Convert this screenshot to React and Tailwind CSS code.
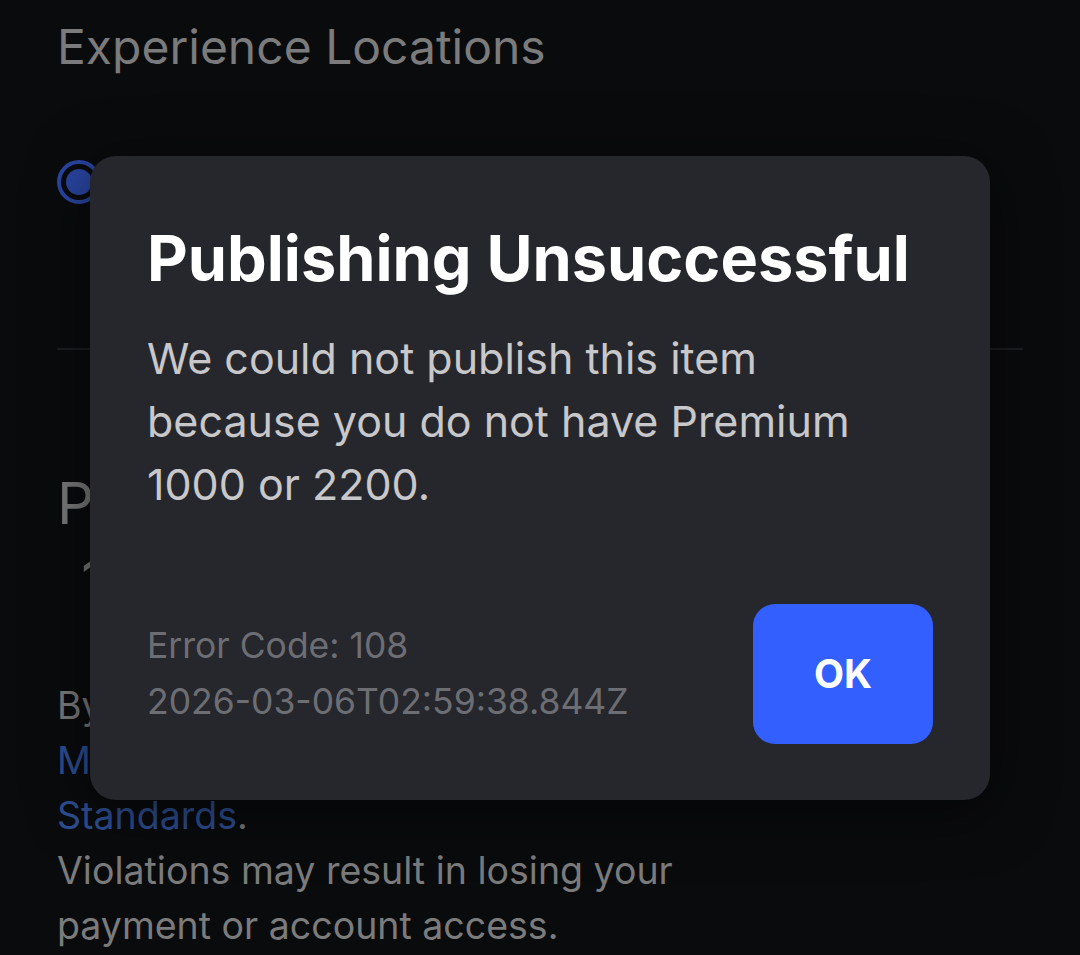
export default function App() {
  const font = { fontFamily: "Inter, 'Noto Sans', sans-serif" };

  return (
    <div className="relative w-[1080px] h-[955px] overflow-hidden bg-[#0a0b0d]" style={font}>
      {/* Page behind the dialog */}
      <div className="flex flex-col px-[57px] text-[#7b7b7c]">
        <div className="pt-[17px] text-[48px] leading-[60px]">Experience Locations</div>

        <div className="mt-[82px] flex items-center h-[46px]">
          <div className="w-[44px] h-[44px] rounded-full border-[4px] border-[#2a46a3] flex items-center justify-center">
            <div className="w-[26px] h-[26px] rounded-full bg-[#2a46a3]" />
          </div>
        </div>

        <div className="mt-[143px] h-[2px] bg-[#1c1d21]" />

        <div className="mt-[118px] text-[58px] leading-[70px]">Price</div>
        <div className="pl-[24px] mt-[8px] text-[60px] leading-[70px]">1,000</div>

        <div className="mt-[62px] text-[37.5px] leading-[55px]">
          <span className="block">By publishing, you agree to our</span>
          <span className="block text-[#2e4f93]">Marketplace Policy and Community</span>
          <span className="block">
            <span className="text-[#2e4f93]">Standards</span>.
          </span>
          <span className="block">Violations may result in losing your</span>
          <span className="block">payment or account access.</span>
        </div>
      </div>

      {/* Dialog */}
      <div className="absolute left-[90px] top-[156px] w-[900px] h-[644px] rounded-[26px] bg-[#26272c] shadow-[0_10px_60px_rgba(0,0,0,0.6)] px-[57px] pt-[62px] flex flex-col">
        <h1 className="text-white font-bold text-[63px] leading-[80px]">
          Publishing Unsuccessful
        </h1>
        <p className="mt-[29px] text-[#c8c8cb] text-[43px] leading-[63px] w-[740px]">
          We could not publish this item because you do not have Premium 1000 or 2200.
        </p>

        <div className="mt-auto mb-[56px] flex items-center justify-between">
          <div className="text-[#6d6e73] text-[35.5px] leading-[56px]">
            <div>Error Code: 108</div>
            <div>2026-03-06T02:59:38.844Z</div>
          </div>
          <button className="w-[180px] h-[140px] rounded-[22px] bg-[#335fff] text-white font-bold text-[39px]">
            OK
          </button>
        </div>
      </div>
    </div>
  );
}
